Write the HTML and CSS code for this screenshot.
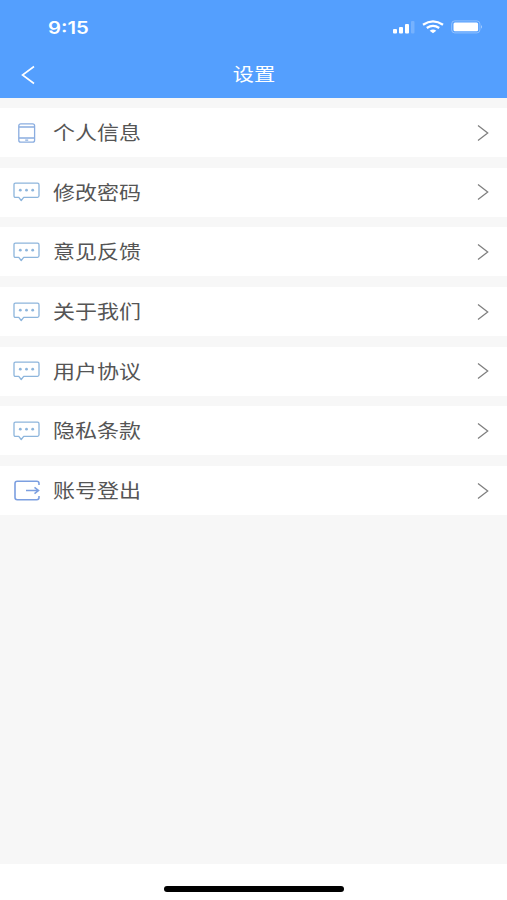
FILE: index.html
```html
<!DOCTYPE html>
<html lang="zh-CN">
<head>
  <meta charset="UTF-8">
  <meta name="viewport" content="width=device-width, initial-scale=1.0">
  <title>设置</title>
  <link rel="stylesheet" href="styles.css">
</head>
<body>
  <!-- Shared icons -->
  <svg class="sprite" width="0" height="0">
    <symbol id="message" viewBox="0 0 28 20">
      <path d="M2.5 1.2H24.5Q26 1.2 26 2.7V13.8Q26 15.3 24.5 15.3H10.7L8.2 18.5L5.8 15.3H2.5Q1 15.3 1 13.8V2.7Q1 1.2 2.5 1.2Z" fill="none" stroke="currentColor" stroke-width="1.3" stroke-linejoin="round"/>
      <g fill="currentColor"><circle cx="7.3" cy="8.2" r="1.4"/><circle cx="13.5" cy="8.2" r="1.4"/><circle cx="19.7" cy="8.2" r="1.4"/></g>
    </symbol>
    <symbol id="arrow" viewBox="0 0 12 18">
      <path d="M1 1.5L10.7 9L1 16.5" fill="none" stroke="currentColor" stroke-width="1.3"/>
    </symbol>
  </svg>

  <header class="header">
    <div class="status-bar">
      <span class="time">9:15</span>
      <div class="status-icons">
        <svg class="signal" width="22" height="14" viewBox="0 0 22 14" fill="#fff">
          <rect x="0" y="9" width="4" height="4.5" rx="1"/>
          <rect x="6" y="7" width="4" height="6.5" rx="1"/>
          <rect x="12" y="4" width="4" height="9.5" rx="1"/>
          <rect x="18" y="1" width="3.5" height="12.5" rx="1" opacity="0.2"/>
        </svg>
        <svg class="wifi" width="22" height="14" viewBox="0 0 22 14" fill="none" stroke="#fff" stroke-width="2.3">
          <path d="M1 4.8Q11 -2 21 4.8"/>
          <path d="M4.8 8Q11 3.6 17.2 8"/>
          <path d="M11 13.3L7.7 10.8Q11 8.3 14.3 10.8Z" fill="#fff" stroke="none"/>
        </svg>
        <svg class="battery" width="32" height="14" viewBox="0 0 32 14">
          <rect x="0.7" y="0.9" width="28.2" height="12" rx="3" fill="none" stroke="#fff" stroke-opacity="0.35"/>
          <rect x="2.5" y="2.6" width="24.6" height="8.6" rx="1.5" fill="#fff"/>
          <path d="M30 5Q32 6.9 30 8.8Z" fill="#fff" fill-opacity="0.5"/>
        </svg>
      </div>
    </div>
    <nav class="nav-bar">
      <svg class="back" width="14" height="20" viewBox="0 0 14 20" fill="none" stroke="#fff" stroke-width="1.6"><path d="M13 1.5L1.5 10L13 18.5"/></svg>
      <h1 class="title">设置</h1>
    </nav>
  </header>

  <main class="menu">
    <a class="item">
      <svg class="icon phone" viewBox="0 0 28 20" fill="none" stroke="currentColor" stroke-width="1.3">
        <rect x="5.8" y="0.8" width="15.8" height="18.4" rx="2"/>
        <path d="M6 4H21.5M6 15H21.5M12.2 17.2H15.2"/>
      </svg>
      <span class="label">个人信息</span>
      <svg class="arrow"><use href="#arrow"/></svg>
    </a>
    <a class="item">
      <svg class="icon"><use href="#message"/></svg>
      <span class="label">修改密码</span>
      <svg class="arrow"><use href="#arrow"/></svg>
    </a>
    <a class="item">
      <svg class="icon"><use href="#message"/></svg>
      <span class="label">意见反馈</span>
      <svg class="arrow"><use href="#arrow"/></svg>
    </a>
    <a class="item">
      <svg class="icon"><use href="#message"/></svg>
      <span class="label">关于我们</span>
      <svg class="arrow"><use href="#arrow"/></svg>
    </a>
    <a class="item">
      <svg class="icon"><use href="#message"/></svg>
      <span class="label">用户协议</span>
      <svg class="arrow"><use href="#arrow"/></svg>
    </a>
    <a class="item">
      <svg class="icon"><use href="#message"/></svg>
      <span class="label">隐私条款</span>
      <svg class="arrow"><use href="#arrow"/></svg>
    </a>
    <a class="item">
      <svg class="icon logout" viewBox="0 0 28 20" fill="none" stroke="currentColor" stroke-width="1.6">
        <path d="M26 4.5V3Q26 0.8 23.8 0.8H4.2Q2 0.8 2 3V17Q2 19.2 4.2 19.2H23.8Q26 19.2 26 17V15.5"/>
        <path d="M13 10H25M21.5 6.8L25.5 10L21.5 13.2"/>
      </svg>
      <span class="label">账号登出</span>
      <svg class="arrow"><use href="#arrow"/></svg>
    </a>
  </main>

  <footer class="home-area">
    <div class="home-indicator"></div>
  </footer>
</body>
</html>
```

FILE: styles.css
```css
* {
  box-sizing: border-box;
  margin: 0;
  padding: 0;
}

body {
  height: 100vh;
  display: flex;
  flex-direction: column;
  overflow: hidden;
  background: #f7f7f7;
  color: #555;
  font-family: "Liberation Sans", "Noto Sans CJK SC", sans-serif;
}

.sprite {
  display: none;
}

.header {
  height: 97.5px;
  flex: none;
  background: #549ffe;
  color: #fff;
}

.status-bar {
  height: 54px;
  display: flex;
  justify-content: space-between;
  align-items: center;
  padding: 0 24px 0 48px;
}

.time {
  font-family: Inter, sans-serif;
  font-size: 17px;
  font-weight: 600;
  padding-top: 1px;
  transform: scaleX(1.19);
  transform-origin: left;
}

.status-icons {
  display: flex;
  align-items: center;
  gap: 7px;
}

.nav-bar {
  height: 42px;
  display: grid;
  grid-template-columns: 1fr auto 1fr;
  align-items: center;
  padding: 0 21px;
}

.title {
  grid-column: 2;
  font-size: 18px;
  font-weight: 400;
  line-height: 40px;
  transform: scaleX(1.18);
}

.menu {
  flex: 1;
  display: flex;
  flex-direction: column;
  gap: 10.7px;
  padding-top: 10.5px;
}

.item {
  height: 49px;
  display: flex;
  align-items: center;
  padding: 0 18px 0 13px;
  background: #fff;
}

.icon {
  width: 28px;
  height: 20px;
  color: #8db5dc;
}

.phone {
  color: #8aade0;
}

.logout {
  height: 21px;
  color: #7c9fe0;
}

/* wide lettering */
.label {
  margin-left: 11.5px;
  padding-top: 3px;
  font-size: 19px;
  line-height: 28px;
  transform: scaleX(1.157);
  transform-origin: left;
}

.arrow {
  width: 12px;
  height: 18px;
  margin-left: auto;
  color: #808080;
}

.home-area {
  height: 36px;
  flex: none;
  display: flex;
  justify-content: center;
  padding-top: 22px;
  background: #fff;
}

.home-indicator {
  width: 180px;
  height: 6px;
  border-radius: 3px;
  background: #000;
}
```
